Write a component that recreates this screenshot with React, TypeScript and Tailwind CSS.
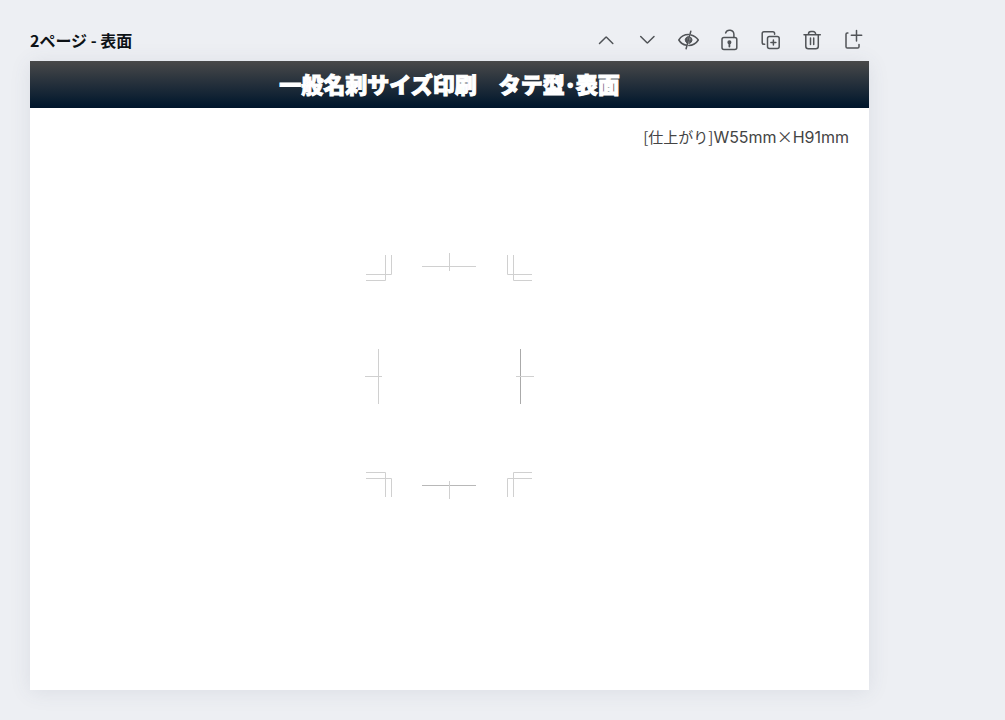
import type { ReactNode } from "react";

type Action = { label: string; icon: ReactNode };

const actions: Action[] = [
  { label: "ページを上に移動", icon: <path d="m4.5 15.5 6.300-6.200a.5.5 0 0 1 .7 0l6.300 6.200" /> },
  { label: "ページを下に移動", icon: <path d="m4.700 8.500 6.300 6.200a.5.5 0 0 0 .7 0l6.300-6.200" /> },
  {
    label: "ページを非表示",
    icon: (
      <>
        <path d="M9.500 17.300C6 16.600 3.300 14.500 1.800 12 3.700 8.900 7.200 6.600 11.500 6.600M14 6.900c3.100.7 5.700 2.600 7.300 5.100-1.900 3-5.400 5.400-9.500 5.400" />
        <path d="M11.100 8.600a3.500 3.500 0 0 0-1.400 6.300z" fill="currentColor" strokeWidth="1" />
        <path d="M13.900 9.400a3.500 3.500 0 0 1-1.700 6z" fill="currentColor" strokeWidth="1" />
        <path d="M13.800 3.300 9.100 20.700" />
      </>
    ),
  },
  {
    label: "ページをロック",
    icon: (
      <>
        <rect x="4" y="9.500" width="14.800" height="12" rx="2" />
        <path d="M15.900 9.500V6.300a4.300 4.300 0 0 0-8.300-1.400" />
        <path d="M11.400 14.500v4" strokeWidth="1.800" />
        <circle cx="11.400" cy="14.200" r="1.300" fill="currentColor" />
      </>
    ),
  },
  {
    label: "ページを複製",
    icon: (
      <>
        <path d="M5.700 16.300H5a1.800 1.800 0 0 1-1.800-1.800V5.600A1.800 1.800 0 0 1 5 3.800h8.800a1.800 1.800 0 0 1 1.800 1.800v.6" />
        <rect x="8.500" y="8.500" width="11.700" height="12" rx="2" />
        <path d="M14.400 12v5M11.900 14.500h5" />
      </>
    ),
  },
  {
    label: "ページを削除",
    icon: (
      <>
        <path d="M4 6.800h16.300M8.500 6.500V6a2.500 2.500 0 0 1 2.500-2.500h2A2.500 2.500 0 0 1 15.600 6v.5" />
        <path d="M5.800 7v11.300a2.500 2.500 0 0 0 2.500 2.500h7.500a2.500 2.500 0 0 0 2.500-2.500V7" />
        <path d="M10.500 10v6.500M13.700 10v6.500" />
      </>
    ),
  },
  {
    label: "ページを追加",
    icon: (
      <>
        <path d="M6.900 4.900h-.6A1.300 1.300 0 0 0 5 6.200v12.500A1.300 1.300 0 0 0 6.300 20h10.400a1.300 1.300 0 0 0 1.300-1.300V16.500" />
        <path d="M15.500 2.500V13M10.300 7.300h10.400" />
      </>
    ),
  },
];

function CropMarks() {
  return (
    <svg
      viewBox="0 0 170 246"
      className="h-[246px] w-[170px] text-[#d0d0d0]"
      fill="none"
      stroke="currentColor"
      role="img"
      aria-label="トンボ"
    >
      <path d="M20.500 2V27.500H1M26.500 2V21.500H1" />
      <path d="M142.500 2V21.500H167M148.500 2V27.500H167" />
      <path d="M57 13.500H111M84.500 0V18" />
      <path d="M13.500 96V151M0 123.500H17" />
      <path d="M155.500 96V151" stroke="#aaaaaa" />
      <path d="M151 123.500H169" />
      <path d="M1 219.500H20.500V244M1 225.500H26.500V244" />
      <path d="M167 219.500H148.500V244M167 225.500H142.500V244" />
      <path d="M57 232.500H111" stroke="#b8b8b8" />
      <path d="M84.500 228V246" />
    </svg>
  );
}

export default function App() {
  return (
    <main className="min-h-screen bg-[#edeff3] pt-5 pr-[136px] pb-[30px] pl-[30px] font-['Noto_Sans_CJK_JP',sans-serif]">
      <header className="flex h-10 items-center justify-between pr-1">
        <h2 className="text-[16px] leading-6 font-bold text-[#0d1216]">2ページ - 表面</h2>
        <div className="flex gap-[17px]">
          {actions.map(({ label, icon }) => (
            <button key={label} type="button" aria-label={label} className="size-6 text-[#505357]">
              <svg
                viewBox="0 0 24 24"
                className="size-6"
                fill="none"
                stroke="currentColor"
                strokeWidth="1.5"
                strokeLinecap="round"
                strokeLinejoin="round"
                aria-hidden="true"
              >
                {icon}
              </svg>
            </button>
          ))}
        </div>
      </header>
      <article className="mt-px flex min-h-[629px] flex-col bg-white shadow-[0_2px_20px_rgba(64,79,109,0.10)]">
        <h1 className="flex h-[47px] items-center justify-center bg-linear-to-b from-[#494949] to-[#00152b] pb-1 text-[22px] leading-8 font-black text-white [-webkit-text-stroke:1px_white]">
          一般名刺サイズ印刷　タテ型･表面
        </h1>
        <p className="mt-4 pr-5 text-right font-['Inter','Noto_Sans_CJK_JP',sans-serif] text-[16px] leading-6 text-[#444444]">
          <span className="font-['Noto_Sans_CJK_JP',sans-serif] text-[15px]">[仕上がり]</span>W55mm
          <span className="font-['Noto_Sans_CJK_JP',sans-serif]">×</span>H91mm
        </p>
        <div className="mt-[104px] flex justify-center">
          <CropMarks />
        </div>
      </article>
    </main>
  );
}
